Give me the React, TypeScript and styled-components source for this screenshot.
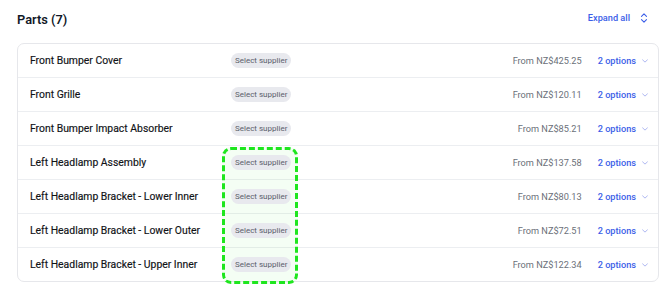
import React from "react";
import styled, {createGlobalStyle} from "styled-components";

const GlobalStyle = createGlobalStyle`
    body {
        margin: 0;
        background: #ffffff;
        font-family: Roboto, Inter, "Liberation Sans", sans-serif;
        color: #111827;
    }
`;

const Page = styled.div`
    width: 670px;
    height: 292px;
    box-sizing: border-box;
    padding: 8px 11px 0 17px;
    overflow: hidden;
`;

const Header = styled.div`
    display: flex;
    align-items: center;
    justify-content: space-between;
    height: 22px;
    margin-bottom: 13px;
`;

const Title = styled.h2`
    margin: 0;
    font-size: 12.8px;
    font-weight: 600;
    color: #111827;
`;

const ExpandButton = styled.button`
    display: flex;
    align-items: center;
    gap: 10px;
    border: 0;
    background: none;
    padding: 0 11px 3px 0;
    font: inherit;
    font-size: 9.2px;
    font-weight: 500;
    color: #3b5ee8;
    cursor: pointer;
`;

const Card = styled.div`
    position: relative;
    border: 1px solid #e6e7eb;
    border-radius: 7px;
`;

const Row = styled.div`
    display: grid;
    grid-template-columns: 201px auto 1fr auto;
    align-items: center;
    height: 33px;
    padding: 0 9px 0 12px;
    border-top: 1px solid #eceef1;

    &:first-child {
        border-top: 0;
    }
`;

const Name = styled.span`
    font-size: 10.4px;
    font-weight: 400;
    color: #111317;
    white-space: nowrap;
    -webkit-text-stroke: 0.15px #111317;
`;

const Pill = styled.span`
    display: inline-flex;
    align-items: center;
    height: 15px;
    padding: 0 4px;
    border-radius: 8px;
    background: #e8e9ee;
    font-size: 8px;
    color: #5b606b;
    position: relative;
    z-index: 1;
`;

const Price = styled.span`
    justify-self: end;
    font-size: 9.2px;
    color: #6b7079;
    margin-right: 16px;
`;

const Options = styled.span`
    display: flex;
    align-items: center;
    gap: 5px;
    font-size: 9.2px;
    font-weight: 500;
    color: #3b5ee8;
`;

const Highlight = styled.div`
    position: absolute;
    left: 204px;
    top: 103px;
    width: 76px;
    height: 137px;
    box-sizing: border-box;
    border: 3px dashed #1ee61e;
    border-radius: 9px;
    background: rgba(30, 230, 30, 0.05);
    pointer-events: none;
`;

const parts = [
    {name: "Front Bumper Cover", price: "NZ$425.25"},
    {name: "Front Grille", price: "NZ$120.11"},
    {name: "Front Bumper Impact Absorber", price: "NZ$85.21"},
    {name: "Left Headlamp Assembly", price: "NZ$137.58"},
    {name: "Left Headlamp Bracket - Lower Inner", price: "NZ$80.13"},
    {name: "Left Headlamp Bracket - Lower Outer", price: "NZ$72.51"},
    {name: "Left Headlamp Bracket - Upper Inner", price: "NZ$122.34"},
];

const ChevronDown = () => (
    <svg width="8" height="8" viewBox="0 0 10 10" fill="none">
        <path d="M2 3.6 L5 6.4 L8 3.6" stroke="#9aa6ee" strokeWidth="1" strokeLinecap="round"
              strokeLinejoin="round"/>
    </svg>
);

const ChevronsUpDown = () => (
    <svg width="8" height="12" viewBox="0 0 8 12" fill="none">
        <path d="M1.5 4.3 L4 1.8 L6.5 4.3 M1.5 7.7 L4 10.2 L6.5 7.7" stroke="#3b5ee8" strokeWidth="1.1"
              strokeLinecap="round" strokeLinejoin="round"/>
    </svg>
);

export default function App() {
    return (
        <Page>
            <GlobalStyle/>
            <Header>
                <Title>Parts ({parts.length})</Title>
                <ExpandButton>
                    Expand all
                    <ChevronsUpDown/>
                </ExpandButton>
            </Header>
            <Card>
                {parts.map((part) => (
                    <Row key={part.name}>
                        <Name>{part.name}</Name>
                        <Pill>Select supplier</Pill>
                        <Price>From {part.price}</Price>
                        <Options>
                            2 options
                            <ChevronDown/>
                        </Options>
                    </Row>
                ))}
                <Highlight/>
            </Card>
        </Page>
    );
}
